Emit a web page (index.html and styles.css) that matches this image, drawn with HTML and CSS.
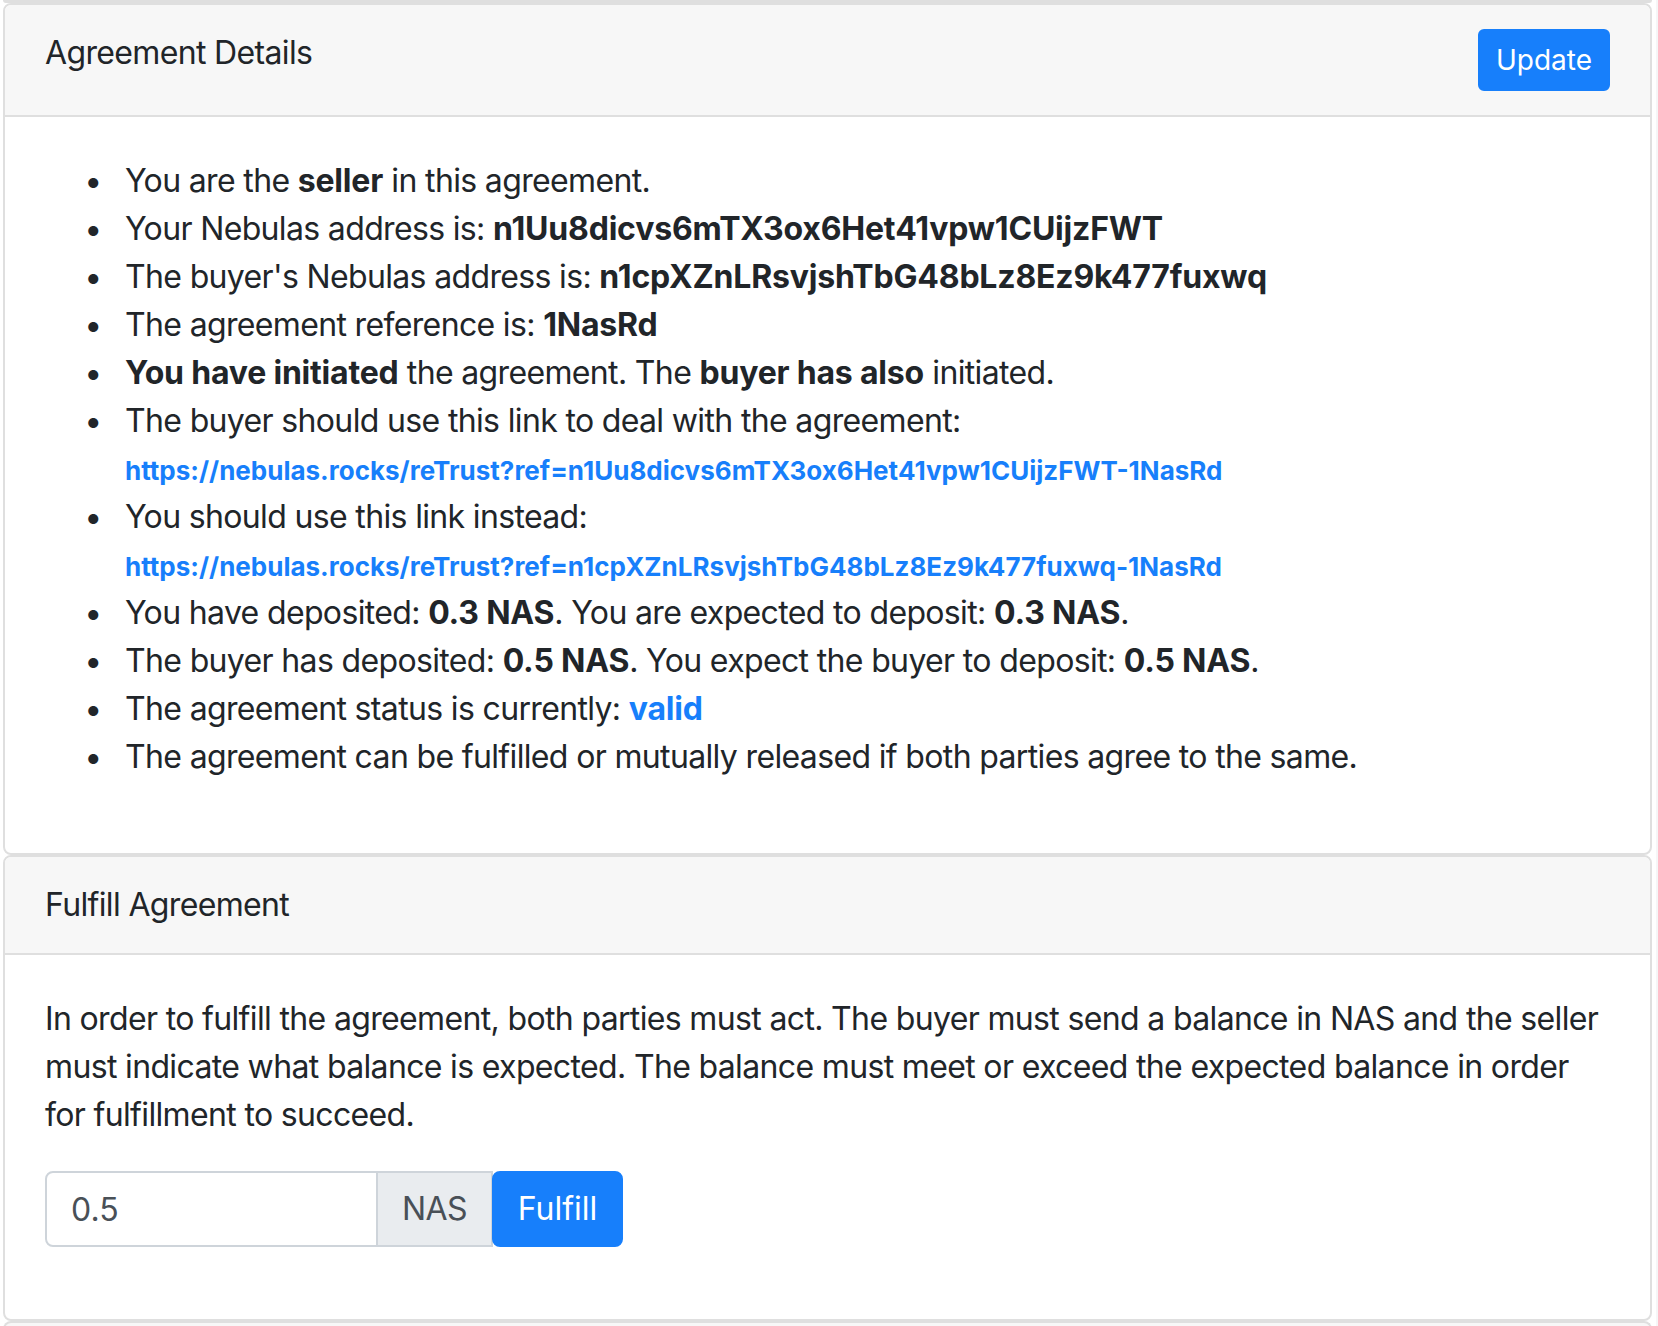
FILE: index.html
```html
<!DOCTYPE html>
<html lang="en">
<head>
<meta charset="utf-8">
<title>Agreement</title>
<link rel="stylesheet" href="styles.css">
</head>
<body>
<div class="page">
  <div class="stack">
    <div class="card-tail"></div>

    <section class="card">
      <header class="card-header">
        <h5 class="card-title">Agreement Details</h5>
        <button class="btn btn-primary btn-sm" type="button">Update</button>
      </header>
      <div class="card-body">
        <ul class="details">
          <li>You are the <b>seller</b> in this agreement.</li>
          <li>Your Nebulas address is: <b>n1Uu8dicvs6mTX3ox6Het41vpw1CUijzFWT</b></li>
          <li>The buyer's Nebulas address is: <b>n1cpXZnLRsvjshTbG48bLz8Ez9k477fuxwq</b></li>
          <li>The agreement reference is: <b>1NasRd</b></li>
          <li><b>You have initiated</b> the agreement. The <b>buyer has also</b> initiated.</li>
          <li>The buyer should use this link to deal with the agreement:<br><a class="ref-link" href="#">https://nebulas.rocks/reTrust?ref=n1Uu8dicvs6mTX3ox6Het41vpw1CUijzFWT-1NasRd</a></li>
          <li>You should use this link instead:<br><a class="ref-link" href="#">https://nebulas.rocks/reTrust?ref=n1cpXZnLRsvjshTbG48bLz8Ez9k477fuxwq-1NasRd</a></li>
          <li>You have deposited: <b>0.3 NAS</b>. You are expected to deposit: <b>0.3 NAS</b>.</li>
          <li>The buyer has deposited: <b>0.5 NAS</b>. You expect the buyer to deposit: <b>0.5 NAS</b>.</li>
          <li>The agreement status is currently: <a class="status" href="#">valid</a></li>
          <li>The agreement can be fulfilled or mutually released if both parties agree to the same.</li>
        </ul>
      </div>
    </section>

    <section class="card">
      <header class="card-header">
        <h5 class="card-title">Fulfill Agreement</h5>
      </header>
      <div class="card-body">
        <p class="intro">In order to fulfill the agreement, both parties must act. The buyer must send a balance in NAS and the seller must indicate what balance is expected. The balance must meet or exceed the expected balance in order for fulfillment to succeed.</p>
        <div class="input-group">
          <input class="form-control" type="text" value="0.5">
          <span class="addon">NAS</span>
          <button class="btn btn-primary btn-append" type="button">Fulfill</button>
        </div>
      </div>
    </section>

    <div class="card-next"></div>
  </div>
  <div class="side"></div>
</div>
</body>
</html>
```

FILE: styles.css
```css
* {
  box-sizing: border-box;
}

html, body {
  margin: 0;
  padding: 0;
  background: #ffffff;
}

body {
  font-family: Inter, "Noto Sans", "Liberation Sans", sans-serif;
  font-size: 32px;
  line-height: 48px;
  letter-spacing: -0.65px;
  color: #212529;
}

.page {
  display: flex;
  min-height: 1326px;
}

.stack {
  flex: 1;
  padding-left: 3px;
  padding-right: 4px;
}

.side {
  width: 2px;
  background: #f6f6f7;
}

.card-tail {
  height: 3px;
  border: 2px solid #dfdfdf;
  border-top: 0;
  border-radius: 0 0 8px 8px;
  background: #dfdfdf;
}

.card {
  border: 2px solid #dfdfdf;
  border-radius: 8px;
  background: #fff;
  overflow: hidden;
}

.card-next {
  height: 20px;
  border: 2px solid #dfdfdf;
  border-bottom: 0;
  border-radius: 8px 8px 0 0;
  background: #f7f7f7;
}

.card-header {
  display: flex;
  justify-content: space-between;
  align-items: flex-start;
  padding: 24px 40px;
  background: #f7f7f7;
  border-bottom: 2px solid #dfdfdf;
}

.card-title {
  margin: 0;
  font-size: 32px;
  font-weight: 400;
  line-height: 48px;
}

.card-body {
  padding: 40px;
}

.details {
  margin: 0 0 32px;
  padding-left: 80px;
}

.details li::marker {
  content: "\2022\2002\00a0";
  font-size: 32px;
}

.details b {
  font-weight: 700;
  letter-spacing: -0.2px;
}

.ref-link {
  font-size: 26px;
  line-height: 26px;
  font-weight: 700;
  letter-spacing: 0;
  color: #177ffb;
  text-decoration: none;
}

.status {
  font-weight: 700;
  letter-spacing: -0.2px;
  color: #177ffb;
  text-decoration: none;
}

.intro {
  margin: 0 0 32px;
}

.btn {
  font-family: inherit;
  border: 2px solid #177ffb;
  color: #fff;
  background: #177ffb;
  cursor: pointer;
}

.btn-sm {
  font-size: 28px;
  line-height: 42px;
  padding: 8px 16px;
  border-radius: 6px;
}

.input-group {
  display: flex;
  align-items: stretch;
  margin-bottom: 32px;
}

.form-control {
  width: 333px;
  height: 76px;
  padding: 12px 24px;
  font-family: inherit;
  font-size: 32px;
  line-height: 48px;
  color: #495057;
  border: 2px solid #ced4da;
  border-radius: 8px 0 0 8px;
  background: #fff;
}

.addon {
  display: flex;
  align-items: center;
  padding: 12px 24px;
  margin-left: -2px;
  color: #495057;
  background: #e9ecef;
  border: 2px solid #ced4da;
}

.btn-append {
  font-size: 32px;
  line-height: 48px;
  padding: 12px 24px;
  border-radius: 8px;
  margin-left: -1px;
}
```
